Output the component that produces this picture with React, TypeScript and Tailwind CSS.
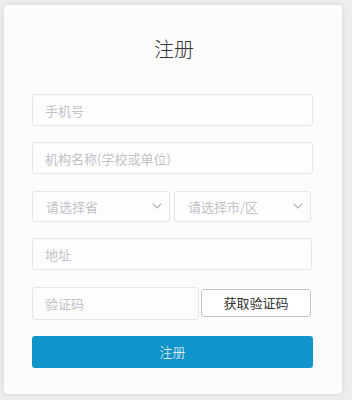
import React from 'react';

const font = { fontFamily: '"Noto Sans CJK SC", "Noto Sans", sans-serif' };

const Chevron: React.FC = () => (
  <svg width="10" height="6" viewBox="0 0 10 6" fill="none" className="shrink-0">
    <path d="M1 1l4 4 4-4" stroke="#b4b4ba" strokeWidth="1.1" strokeLinecap="round" strokeLinejoin="round" />
  </svg>
);

const inputCls =
  'w-full h-[32px] px-[12px] rounded-[3px] border border-[#e6e6ea] bg-[#fdfdfe] text-[13px] text-[#333] outline-none placeholder:text-[#c2c2c7]';

const SelectBox: React.FC<{ label: string; className?: string }> = ({ label, className }) => (
  <div
    className={`h-[31px] flex items-center justify-between pl-[13px] pr-[7px] rounded-[3px] border border-[#e6e6ea] bg-[#fdfdfe] text-[13px] text-[#c2c2c7] ${className ?? ''}`}
  >
    <span>{label}</span>
    <Chevron />
  </div>
);

export default function App() {
  return (
    <div className="w-[352px] h-[400px] bg-[#ededee] pt-[5px] pl-[4px]" style={font}>
      <div className="w-[338px] h-[389px] bg-[#fcfcfd] rounded-[4px] shadow-[0_0_5px_rgba(0,0,0,0.10)] pt-[30px] pl-[28px] pr-[29px] pb-[26px] flex flex-col">
        <h1 className="text-[20px] leading-[28px] font-light text-[#333] text-center pl-[3px]">注册</h1>
        <div className="mt-[31px] flex flex-col gap-[16.4px]">
          <input className={inputCls} placeholder="手机号" />
          <input className={inputCls} placeholder="机构名称(学校或单位)" />
          <div className="flex gap-[4px] w-[280px]">
            <SelectBox label="请选择省" className="w-[138px]" />
            <SelectBox label="请选择市/区" className="w-[137px]" />
          </div>
          <input className={`${inputCls} !w-[280px]`} placeholder="地址" />
          <div className="flex items-center gap-[2px] w-[280px]">
            <input className={`${inputCls} !w-[167px] !h-[33px]`} placeholder="验证码" />
            <button className="w-[110px] h-[28px] rounded-[3px] border border-[#c4c4c8] bg-white text-[13px] text-[#333]">
              获取验证码
            </button>
          </div>
          <button className="w-full h-[32px] rounded-[3px] bg-[#1194c9] text-white text-[13px] font-light">注册</button>
        </div>
      </div>
    </div>
  );
}
